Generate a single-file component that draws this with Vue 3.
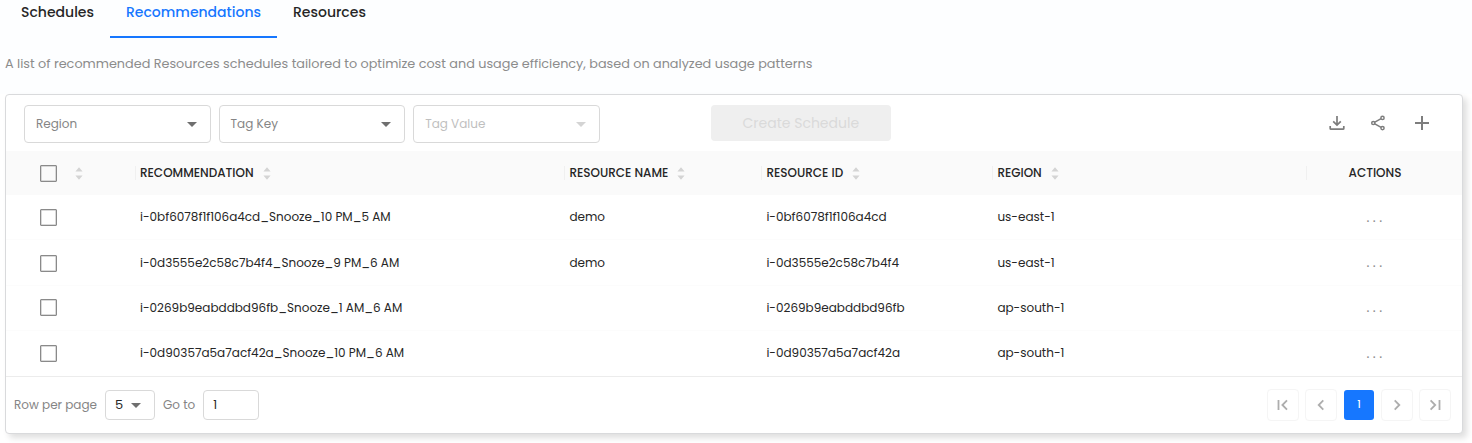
<script setup>
const tabs = [
  { label: 'Schedules' },
  { label: 'Recommendations', active: true },
  { label: 'Resources' },
]
const filters = [
  { label: 'Region' },
  { label: 'Tag Key' },
  { label: 'Tag Value', disabled: true },
]
const columns = ['RECOMMENDATION', 'RESOURCE NAME', 'RESOURCE ID', 'REGION']
const rows = [
  ['i-0bf6078f1f106a4cd_Snooze_10 PM_5 AM', 'demo', 'i-0bf6078f1f106a4cd', 'us-east-1'],
  ['i-0d3555e2c58c7b4f4_Snooze_9 PM_6 AM', 'demo', 'i-0d3555e2c58c7b4f4', 'us-east-1'],
  ['i-0269b9eabddbd96fb_Snooze_1 AM_6 AM', '', 'i-0269b9eabddbd96fb', 'ap-south-1'],
  ['i-0d90357a5a7acf42a_Snooze_10 PM_6 AM', '', 'i-0d90357a5a7acf42a', 'ap-south-1'],
]
const description =
  'A list of recommended Resources schedules tailored to optimize cost and usage efficiency, based on analyzed usage patterns'
</script>

<template>
  <div class="page">
    <nav class="tabs">
      <div v-for="t in tabs" :key="t.label" class="tab" :class="{ active: t.active }">
        <span>{{ t.label }}</span>
      </div>
    </nav>
    <p class="desc"><span>{{ description }}</span></p>

    <section class="card">
      <div class="toolbar">
        <div v-for="f in filters" :key="f.label" class="select" :class="{ disabled: f.disabled }">
          <span>{{ f.label }}</span>
          <svg class="arrow" width="10" height="5" viewBox="0 0 10 5"><path d="M0 0h10L5 5z" /></svg>
        </div>
        <button class="create" disabled><span>Create Schedule</span></button>
        <div class="tools">
          <svg width="16" height="16" viewBox="0 0 16 16" fill="none" stroke="#7d7d7d" stroke-width="1.7">
            <path d="M9 1v9M5.2 6.3 9 10.1l3.8-3.8M2.2 11v2.4q0 .8.8.8h12q.8 0 .8-.8V11" />
          </svg>
          <svg width="16" height="16" viewBox="0 0 16 16" fill="none" stroke="#7d7d7d" stroke-width="1.5">
            <circle cx="3.3" cy="8" r="1.6" /><circle cx="12.5" cy="2.9" r="1.6" /><circle cx="12.5" cy="13.1" r="1.6" />
            <path d="m4.8 7.2 6.3-3.5M4.8 8.8l6.3 3.5" />
          </svg>
          <svg width="16" height="16" viewBox="0 0 16 16" fill="none" stroke="#7d7d7d" stroke-width="2">
            <path d="M8 1v14M1 8h14" />
          </svg>
        </div>
      </div>

      <div class="row head">
        <div class="cell check">
          <i class="box"></i>
          <svg class="sort" width="8" height="13" viewBox="0 0 8 13"><path d="M4 .3 7.6 4.5H.4zM.4 8.5h7.2L4 12.7z" /></svg>
        </div>
        <div v-for="c in columns" :key="c" class="cell">
          <span>{{ c }}</span>
          <svg class="sort" width="8" height="13" viewBox="0 0 8 13"><path d="M4 .3 7.6 4.5H.4zM.4 8.5h7.2L4 12.7z" /></svg>
        </div>
        <div class="cell actions"><span>ACTIONS</span></div>
      </div>

      <div class="body">
        <div v-for="(r, i) in rows" :key="i" class="row">
          <div class="cell check"><i class="box"></i></div>
          <div v-for="(c, j) in r" :key="j" class="cell"><span>{{ c }}</span></div>
          <div class="cell actions dots">...</div>
        </div>
      </div>

      <footer class="footer">
        <span class="muted">Row per page</span>
        <div class="size">
          <span>5</span>
          <svg class="arrow" width="10" height="5" viewBox="0 0 10 5"><path d="M0 0h10L5 5z" /></svg>
        </div>
        <span class="muted">Go to</span>
        <div class="goto">1</div>
        <div class="pager">
          <div class="pg"><svg width="14" height="12" viewBox="0 0 14 12"><path d="M2.5 1v10M11 1.4 6.4 6l4.6 4.6" /></svg></div>
          <div class="pg"><svg width="14" height="12" viewBox="0 0 14 12"><path d="M9.3 1.4 4.7 6l4.6 4.6" /></svg></div>
          <div class="pg current">1</div>
          <div class="pg"><svg width="14" height="12" viewBox="0 0 14 12"><path d="M4.7 1.4 9.3 6l-4.6 4.6" /></svg></div>
          <div class="pg"><svg width="14" height="12" viewBox="0 0 14 12"><path d="M2.6 1.4 7.2 6l-4.6 4.6M11.5 1v10" /></svg></div>
        </div>
      </footer>
    </section>
  </div>
</template>

<style>
body {
  overflow: hidden;
}
</style>

<style scoped>
.page {
  box-sizing: border-box;
  width: 1472px;
  height: 443px;
  padding-left: 5px;
  background: linear-gradient(#fdfeff 94px, #fff 94px);
  font-family: Poppins, Inter, "Open Sans", sans-serif;
  font-size: 12px;
  color: #262626;
  overflow: hidden;
}
.page * {
  box-sizing: border-box;
}
span {
  white-space: nowrap;
  flex: none;
}
svg {
  display: block;
  flex: none;
  overflow: visible;
}
.tabs {
  display: flex;
  height: 38px;
}
.tab {
  padding: 0 16px;
  height: 38px;
  line-height: 24px;
  font-size: 14px;
  font-weight: 500;
  border-bottom: 2px solid transparent;
}
.tab.active {
  color: #1677ff;
  border-color: #1677ff;
}
.desc {
  margin: 0;
  height: 56px;
  line-height: 51px;
  font-size: 12.8px;
  color: #8c8c8c;
}
.card {
  width: 1458px;
  height: 340px;
  background: #fff;
  border: 1px solid #d9dadc;
  border-radius: 4px;
  box-shadow: 4px 4px 6px rgba(0, 0, 0, 0.13);
}
.toolbar {
  display: flex;
  gap: 8px;
  height: 56px;
  padding: 10px 0 0 18px;
}
.select {
  display: flex;
  align-items: center;
  justify-content: space-between;
  width: 186.6px;
  height: 38px;
  padding: 0 13px 0 11px;
  border: 1px solid #d9d9d9;
  border-radius: 4px;
  color: #858585;
}
.arrow {
  fill: #6f6f6f;
}
.select.disabled {
  color: #bfbfbf;
}
.select.disabled .arrow {
  fill: #d4d4d4;
}
.create {
  width: 180px;
  height: 36px;
  margin-left: 103px;
  padding: 0;
  border: 0;
  border-radius: 4px;
  background: #efefef;
  color: #dadada;
  font-family: inherit;
  font-size: 14px;
}
.tools {
  display: flex;
  gap: 26px;
  margin: 10px 32px 0 auto;
}
.tools svg:last-child {
  margin-left: 2px;
}
.row {
  display: grid;
  grid-template-columns: 130px 429px 197px 231px 314px 155px;
  align-items: center;
  height: 45.4px;
  border-bottom: 1px solid #fcfcfc;
}
.cell {
  display: flex;
  align-items: center;
  padding-left: 4.4px;
}
.cell:nth-child(2) {
  padding-left: 4px;
}
.head {
  height: 44px;
  background: #fafafa;
  border: 0;
  font-weight: 500;
}
.head .cell {
  height: 14px;
  border-right: 1px solid #f0f0f0;
}
.head .cell:last-child {
  border: 0;
}
.sort {
  margin-left: 9px;
  fill: #d4d4d4;
}
.cell.check {
  padding-left: 34px;
}
.check .sort {
  margin-left: 18px;
}
.box {
  flex: none;
  width: 17px;
  height: 17px;
  border: 1.5px solid #8a8a8a;
  box-shadow: inset 0 0 0 0.5px #b5b5b5;
  border-radius: 1px;
}
.body .row:nth-child(even) .box {
  margin-top: 1px;
}
.cell.actions {
  justify-content: center;
  padding: 0 19px 0 0;
}
.cell.dots {
  font-size: 14px;
  letter-spacing: 3.4px;
  padding-right: 17px;
  color: #8c8c8c;
}
.body {
  height: 182px;
  border-bottom: 1px solid #ececec;
  overflow: hidden;
}
.footer {
  display: flex;
  align-items: center;
  height: 56px;
  padding: 0 11px 0 8px;
}
.muted {
  color: #858585;
}
.size,
.goto {
  display: flex;
  align-items: center;
  height: 30px;
  margin: 0 8px;
  padding: 0 9px;
  border: 1px solid #d9d9d9;
  border-radius: 4px;
}
.size {
  width: 50px;
  padding: 0 13px 0 9px;
  justify-content: space-between;
  font-size: 13px;
}
.goto {
  width: 56px;
}
.pager {
  display: flex;
  gap: 6px;
  margin-left: auto;
}
.pg {
  display: flex;
  align-items: center;
  justify-content: center;
  width: 32px;
  height: 32px;
  border: 1px solid #f5f5f5;
  border-radius: 4px;
}
.pg svg {
  fill: none;
  stroke: #adadad;
  stroke-width: 1.8;
}
.pg.current {
  background: #1677ff;
  background-clip: padding-box;
  border-color: transparent;
  color: #fff;
  font-size: 10px;
  font-weight: 500;
}
</style>
